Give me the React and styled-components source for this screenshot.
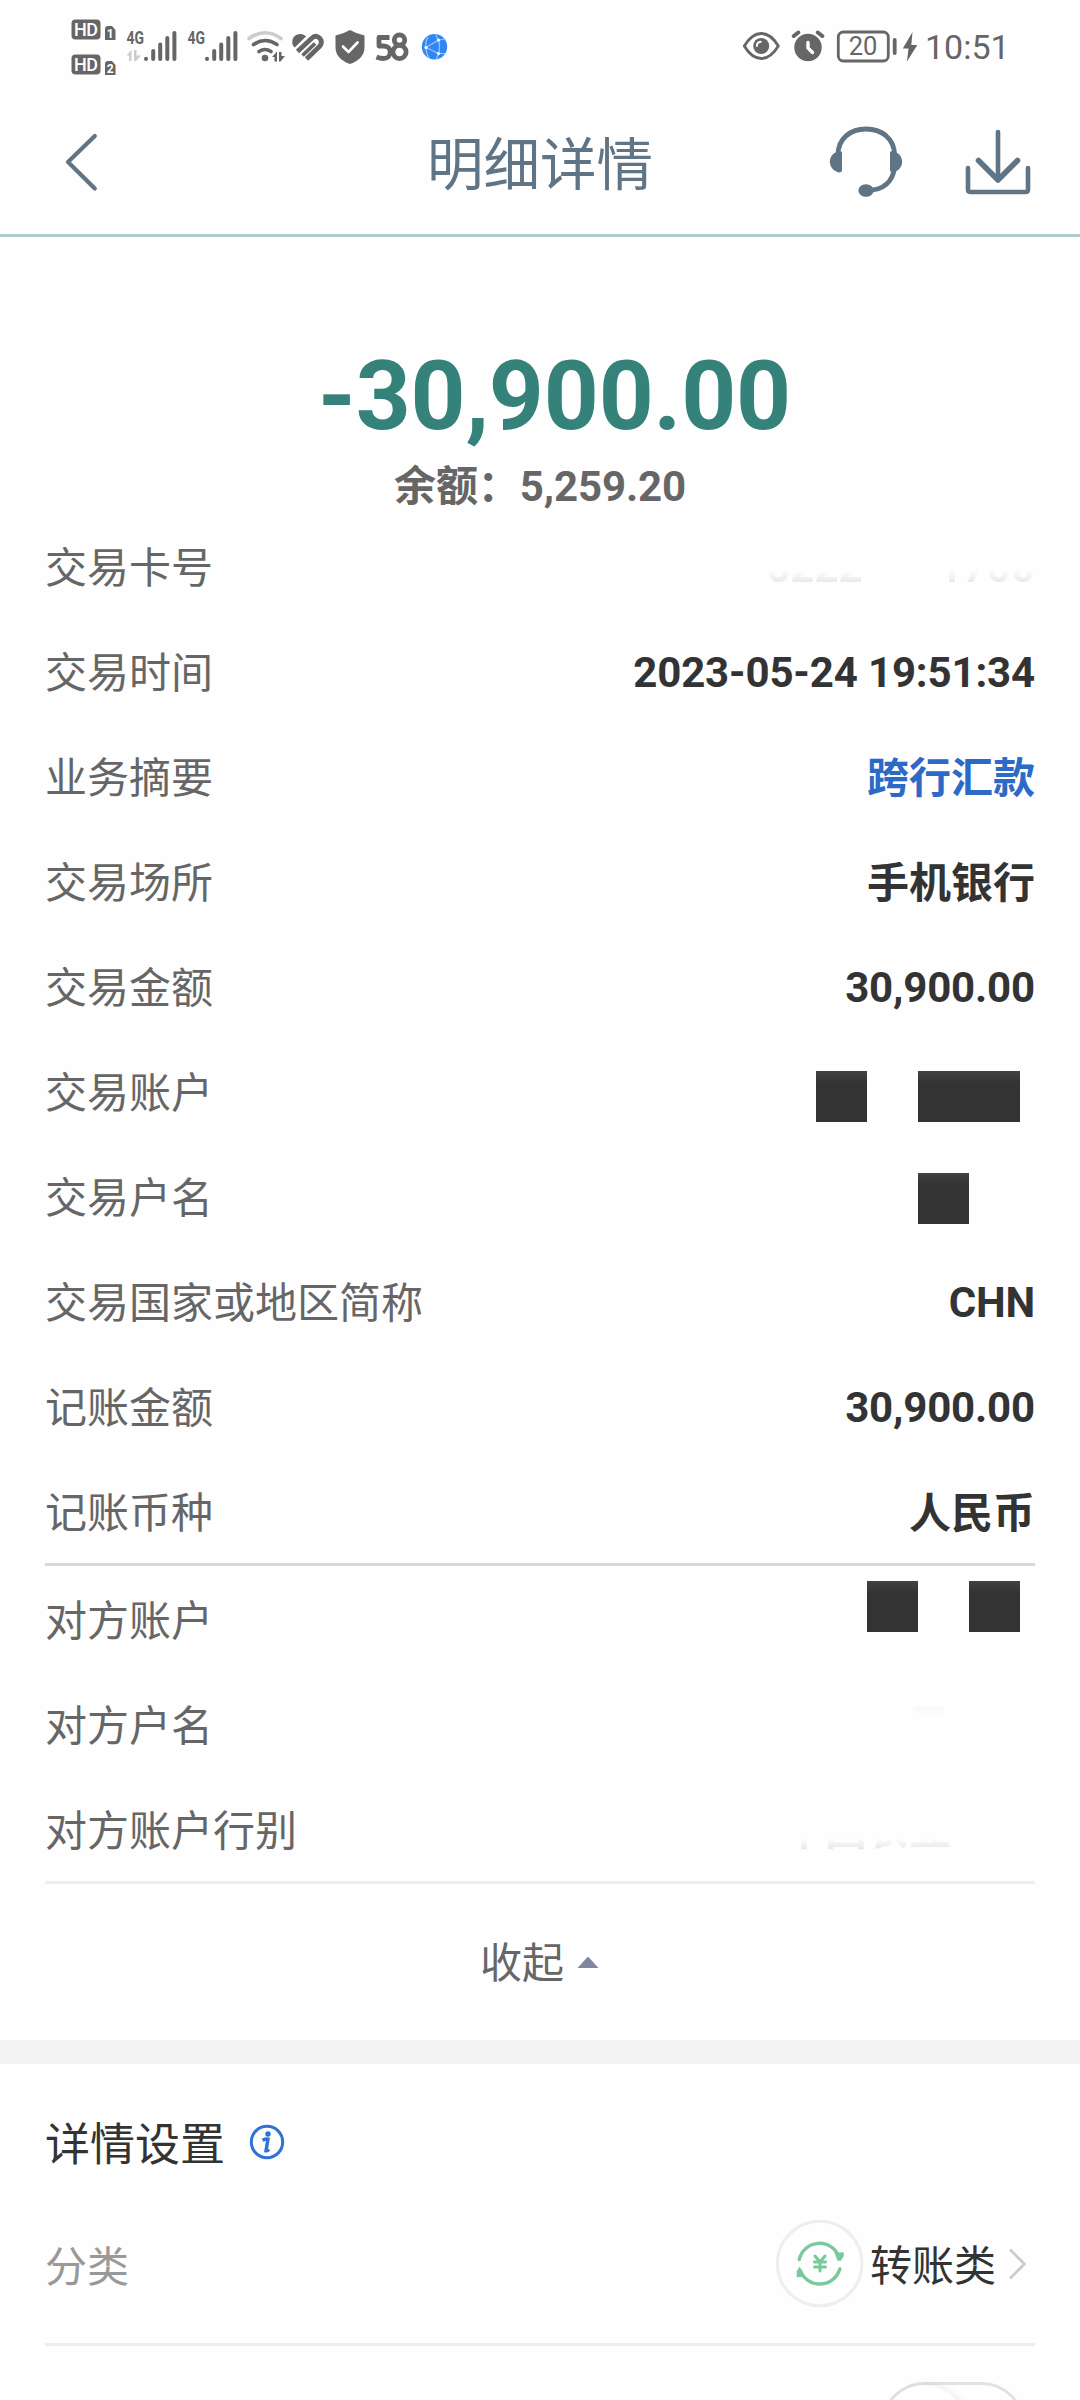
import React from "react";
import styled, { createGlobalStyle } from "styled-components";

const GlobalStyle = createGlobalStyle`
  html, body { margin: 0; padding: 0; background: #fefefe; }
  body { height: 2400px; overflow: hidden; }
  *, *::before, *::after { box-sizing: border-box; }
`;

const Screen = styled.div`
  width: 1080px;
  height: 2400px;
  overflow: hidden;
  display: flex;
  flex-direction: column;
  background: #fefefe;
  color: #333;
  font-family: Roboto, "Noto Sans CJK SC", sans-serif;
  font-size: 42px;
`;

/* ---------- status bar ---------- */

const StatusBar = styled.div`
  height: 90px;
  flex: none;
  display: flex;
  justify-content: space-between;
  padding: 0 73px 0 70px;
  color: #666;
`;

const StatusGroup = styled.div`
  display: flex;
`;

const Glyph = styled.svg`
  display: block;
  flex: none;
  width: ${(p) => p.$w}px;
  height: 90px;
  margin-left: ${(p) => p.$gap || 0}px;
  font-family: Roboto, sans-serif;
`;

const Clock = styled.span`
  width: 82px;
  margin-left: 7px;
  font-size: 34px;
  line-height: 95px;
  white-space: nowrap;
`;

const StatusGlyph = ({ x, w, gap, children }) => (
  <Glyph $w={w} $gap={gap} viewBox={`${x} 0 ${w} 90`} fill="currentColor">
    {children}
  </Glyph>
);

const HdBadges = () => (
  <StatusGlyph x={70} w={48}>
    {[19, 54].map((y, i) => (
      <g key={y}>
        <rect x="71.5" y={y + 0.5} width="29" height="20" rx="4" />
        <text x="86" y={y + 17} fill="#fff" fontSize="18" fontWeight="500" textAnchor="middle" textLength="24">HD</text>
        <path d={`M105 ${y + 21}v-11q0-3 3-3h4l3.500 4v10z`} />
        <text x="110.200" y={y + 18.500} fill="#fff" fontSize="12" fontWeight="700" textAnchor="middle">{i + 1}</text>
      </g>
    ))}
  </StatusGlyph>
);

const Signal = ({ gap, data }) => (
  <StatusGlyph x={126} w={52} gap={gap}>
    <text x="126.500" y="44" fontSize="18" fontWeight="700" textLength="17.500" lengthAdjust="spacingAndGlyphs">4G</text>
    {data && <path fill="#ccc" d="M126.500 55.500l5-5.500v11h-2.500v-5.500zM134 50h2.500v5.500h4.500l-5 5.500h-2z" />}
    <g stroke="currentColor" strokeWidth="4" strokeLinecap="round">
      <path d="M146 58.800v.2M153.200 51v8M160.200 44.500v14.500M167.300 38v21M174.400 33v26" />
    </g>
  </StatusGlyph>
);

const Wifi = () => (
  <StatusGlyph x={246} w={40} gap={7}>
    <g fill="none" strokeWidth="3.600" strokeLinecap="round">
      <path d="M249 38.500q16-11.500 32 0" stroke="#ccc" />
      <path d="M253.500 44.500q11.700-8 23.500 0M259 51.500q6-4 12 0" stroke="currentColor" />
    </g>
    <circle cx="265" cy="58" r="3.300" />
    <path d="M272 57l5-5.500v10h-2.500v-4.500zM279 52h2.500v4h3.500l-4.500 5.500h-1.500z" />
  </StatusGlyph>
);

const Heart = () => (
  <StatusGlyph x={291} w={34} gap={5}>
    <path d="M292.300 43.500c-.5-6 3-9.500 7.700-9.500 3 0 4.800 1 6 2.500L294.800 47.500c-1.500-1.300-2.300-2.500-2.500-4z" />
    <path fill="none" stroke="currentColor" strokeWidth="4.800" d="M297.500 51.500L312 38q4-3.500 7.500 0t.5 8L306.500 59" />
    <path fill="none" stroke="currentColor" strokeWidth="3.800" d="M302.500 55.500L315 43.500" />
  </StatusGlyph>
);

const Shield = () => (
  <StatusGlyph x={335} w={31} gap={10}>
    <path d="M350 30q7 4 14.500 5.500V47q0 12-14.500 17Q335.500 59 335.500 47V35.500Q343 34 350 30z" />
    <path d="M343 46.500l5.500 5.500 9-9.500" fill="none" stroke="#fff" strokeWidth="2.600" strokeLinecap="round" strokeLinejoin="round" />
  </StatusGlyph>
);

const AppBadge = () => (
  <StatusGlyph x={374} w={36} gap={8}>
    <g fill="none" stroke="currentColor" strokeWidth="4.800" strokeLinejoin="round">
      <path d="M389.500 37.500H379V46h4.500c9.500 0 8.500 12.500 0 12.500q-3.500 0-7-1.500" />
      <circle cx="399.500" cy="40" r="5.200" />
      <circle cx="399.500" cy="52" r="6.600" />
    </g>
  </StatusGlyph>
);

const Globe = () => (
  <StatusGlyph x={421} w={27} gap={11}>
    <circle cx="434.500" cy="46.800" r="12.700" fill="#3186f5" />
    <g stroke="#9cc5fb" strokeWidth="1.200" fill="none">
      <path d="M426 47.500L438.500 40M426 47.500L438.500 53.500M438.500 40q2 7 0 13.500M426 47.500q-1-6 2-10.500M426 47.500q0 6 3 10.500M438.500 40l-3-5.500M438.500 40l7-1M438.500 53.500l6.500 0M438.500 53.500l-2 5.500" />
    </g>
    <g fill="#fff">
      <circle cx="426" cy="47.500" r="1.600" />
      <circle cx="438.500" cy="40" r="1.600" />
      <circle cx="438.500" cy="53.500" r="1.600" />
    </g>
  </StatusGlyph>
);

const Eye = () => (
  <StatusGlyph x={742} w={39}>
    <path d="M744.300 46q7.500-12.500 17-12.500T778.300 46q-7.500 12.500-17 12.500T744.300 46z" fill="none" stroke="currentColor" strokeWidth="2.800" strokeLinejoin="round" />
    <circle cx="761.200" cy="46" r="8" />
    <path d="M756.800 46q.2-4 4-4.300" fill="none" stroke="#fff" strokeWidth="1.900" strokeLinecap="round" />
  </StatusGlyph>
);

const Alarm = () => (
  <StatusGlyph x={791} w={35} gap={10}>
    <circle cx="808" cy="47.500" r="13.700" />
    <path d="M793.800 36l4.500-3.500M822.300 36l-4.500-3.500" stroke="currentColor" strokeWidth="4" strokeLinecap="round" />
    <path d="M808 42.500v5.500l4.500 4.500" fill="none" stroke="#fff" strokeWidth="3.400" strokeLinecap="round" strokeLinejoin="round" />
  </StatusGlyph>
);

const Battery = () => (
  <StatusGlyph x={836} w={62} gap={10}>
    <rect x="838.300" y="32" width="50" height="29" rx="5" fill="none" stroke="currentColor" strokeWidth="2.800" />
    <text x="863" y="55" fontSize="25.500" textAnchor="middle">20</text>
    <path d="M894.700 40v13" stroke="currentColor" strokeWidth="3.800" strokeLinecap="round" />
  </StatusGlyph>
);

const Bolt = () => (
  <StatusGlyph x={902} w={16} gap={4}>
    <path d="M912.500 32L902.800 48.500h5.700l-1.500 13L917.300 45h-6z" />
  </StatusGlyph>
);

/* ---------- navigation ---------- */

const NavBar = styled.header`
  height: 147px;
  flex: none;
  display: grid;
  grid-template-columns: 1fr auto 1fr;
  align-items: center;
  padding: 0 48px 0 63px;
  border-bottom: 3px solid #b3c9d0;
  color: #5f7485;
`;

const Title = styled.h1`
  margin: 0 15px 0 0;
  font-size: 56.5px;
  font-weight: 400;
  line-height: 80px;
  padding-top: 7px;
`;

const NavActions = styled.div`
  display: flex;
  justify-content: flex-end;
  gap: 61px;
`;

const Icon = styled.svg`
  display: block;
  flex: none;
  width: ${(p) => p.$w}px;
  height: ${(p) => p.$h}px;
`;

const BackIcon = () => (
  <Icon $w={38} $h={60} viewBox="63 132 38 60" fill="none" stroke="currentColor" strokeWidth="4.200" strokeLinecap="round" strokeLinejoin="round">
    <path d="M94.800 136L68 162l26.800 26.500" />
  </Icon>
);

const HeadsetIcon = () => (
  <Icon $w={74} $h={76} viewBox="830 124 74 76" fill="currentColor">
    <path d="M839 155C839 138 852 129 867 129s28.500 9 28.500 26M895.500 168q-3 21-26 22.500" fill="none" stroke="currentColor" strokeWidth="4.800" />
    <path d="M843 152.500v17.500q0 2.500-3 2.500c-12-3-12-18-1-21q4-1 4 1zM891 152.500v17.500q0 2.500 3 2.500c12-3 12-18 1-21q-4-1-4 1z" />
    <ellipse cx="867" cy="190.500" rx="7.600" ry="6.300" />
  </Icon>
);

const DownloadIcon = () => (
  <Icon $w={68} $h={76} viewBox="965 124 68 76" fill="none" stroke="currentColor" strokeWidth="4.600" strokeLinecap="round" strokeLinejoin="round">
    <path d="M969 168v21.500q0 2.500 2.500 2.500h55q2.500 0 2.500-2.500V168M999 132v47" />
    <path d="M979.500 160.500L999 180l19.500-19.500" strokeWidth="5.600" />
  </Icon>
);

/* ---------- transaction ---------- */

const Summary = styled.section`
  height: 278px;
  flex: none;
  display: flex;
  flex-direction: column;
  align-items: center;
  padding-top: 103px;
  font-weight: 700;
`;

const Amount = styled.div`
  height: 112px;
  padding-left: 29px;
  font-size: 96px;
  line-height: 112px;
  letter-spacing: -0.2px;
  color: #35827b;
`;

const Balance = styled.div`
  margin-top: 4px;
  line-height: 62px;
  letter-spacing: -0.1px;
  color: #666;
`;

const Details = styled.dl`
  flex: none;
  margin: 0 45px;
  padding-top: ${(p) => p.$top || 0}px;
  height: ${(p) => p.$height}px;
  overflow: hidden;
  border-bottom: 3px solid ${(p) => p.$line};
`;

const Row = styled.div`
  height: 105px;
  display: flex;
  align-items: center;
  justify-content: space-between;
`;

const Label = styled.dt`
  padding-top: 2px;
  color: #666;
  line-height: 60px;
`;

const Value = styled.dd`
  margin: 0;
  padding-top: ${(p) => (p.$numeric ? 0 : 2)}px;
  font-weight: 700;
  line-height: 60px;
  letter-spacing: ${(p) => (p.$numeric ? "-0.15px" : "normal")};
  color: ${(p) => (p.$link ? "#2c6ac8" : "#333")};
`;

const Mask = styled.dd`
  align-self: flex-start;
  margin: ${(p) => p.$top}px ${(p) => p.$right}px 0 0;
  display: flex;
  gap: 51px;
`;

const Block = styled.span`
  width: ${(p) => p.$w || 51}px;
  height: 51px;
  background: linear-gradient(#414141, #333 12px);
`;

const Faded = styled.dd`
  margin: 0;
  display: flex;
  gap: 76px;
  font-weight: 700;
  line-height: 60px;
  color: transparent;
  background: linear-gradient(transparent ${(p) => p.$from}px, #dcdcdc ${(p) => p.$to}px);
  background-clip: text;
  -webkit-background-clip: text;
`;

const Smudge = styled.dd`
  align-self: flex-start;
  width: 28px;
  height: 8px;
  margin: 34px 92px 0 0;
  background: linear-gradient(#f8f8f8, #fdfdfd);
`;

const Collapse = styled.button`
  height: 156px;
  flex: none;
  display: flex;
  align-items: center;
  justify-content: center;
  gap: 12px;
  padding: 0;
  border: 0;
  background: none;
  font: inherit;
  color: #666;
`;

const CollapseText = styled.span`
  padding-bottom: 5px;
`;

const Separator = styled.div`
  height: 24px;
  flex: none;
  background: #f3f3f3;
`;

/* ---------- settings ---------- */

const Settings = styled.section`
  flex: none;
  margin: 0 45px;
`;

const SettingsTitle = styled.h2`
  height: 137px;
  margin: 0;
  padding-top: 18px;
  display: flex;
  align-items: center;
  gap: 24px;
  font-size: 45px;
  font-weight: 400;
`;

const Category = styled.div`
  height: 145px;
  display: flex;
  align-items: center;
  border-bottom: 3px solid #ededed;
`;

const CategoryLabel = styled.span`
  flex: 1;
  padding-bottom: 18px;
  color: #999;
`;

const CategoryValue = styled.div`
  display: flex;
  align-items: center;
  padding: 0 7px 17px 0;
`;

const CategoryName = styled.span`
  margin: 0 12px 0 6px;
  padding-bottom: 2px;
`;

const SwitchRow = styled.div`
  display: flex;
  justify-content: flex-end;
  padding: 36px 10px 0 0;
`;

const Switch = styled.span`
  width: 144px;
  height: 87px;
  border: 3px solid #e2e2e6;
  border-radius: 44px;
`;

const Knob = styled.span`
  display: block;
  width: 81px;
  height: 81px;
  border-radius: 50%;
  background: #fefefe;
  box-shadow: 3px 1px 8px rgba(0, 0, 0, 0.09);
`;

const InfoIcon = () => (
  <Icon $w={36} $h={36} viewBox="249 2124 36 36" fill="#2f72d6">
    <circle cx="267" cy="2142" r="15.700" fill="none" stroke="#2f72d6" strokeWidth="3" />
    <circle cx="268" cy="2134" r="2.700" />
    <path d="M262.500 2140.300q3-1.500 5.500-1.200l-2 11.700q1.500.2 3-1.300" fill="none" stroke="#2f72d6" strokeWidth="3.400" />
  </Icon>
);

const TransferIcon = () => (
  <Icon $w={88} $h={88} viewBox="777 2220 88 88" fill="none" stroke="#78ca9b" strokeWidth="3.400" strokeLinecap="round">
    <circle cx="820.700" cy="2263.500" r="42.300" stroke="#eee" strokeWidth="3" />
    <path d="M800.200 2259.500a20.800 20.800 0 0 1 40-2M840.800 2269a20.800 20.800 0 0 1-39.500 1.500" />
    <path d="M836.500 2253.500l7.500-.5v3l-2.500 4h-2.500zM805 2276l-6.500.500v-5l2-3.500z" fill="#78ca9b" strokeWidth="1.500" />
    <path d="M816 2256l5 6 5-6M815.500 2262h11M815.500 2267h11M821 2262v9" strokeWidth="3" />
  </Icon>
);

const detailRows = [
  { label: "交易时间", value: "2023-05-24 19:51:34", numeric: true },
  { label: "业务摘要", value: "跨行汇款", link: true },
  { label: "交易场所", value: "手机银行" },
  { label: "交易金额", value: "30,900.00", numeric: true },
];

const bookingRows = [
  { label: "交易国家或地区简称", value: "CHN", numeric: true },
  { label: "记账金额", value: "30,900.00", numeric: true },
  { label: "记账币种", value: "人民币" },
];

const DetailRow = ({ label, value, link, numeric, children }) => (
  <Row>
    <Label>{label}</Label>
    {value ? (
      <Value $link={link} $numeric={numeric}>
        {value}
      </Value>
    ) : (
      children
    )}
  </Row>
);

export default function App() {
  return (
    <>
      <GlobalStyle />
      <Screen>
        <StatusBar>
          <StatusGroup>
            <HdBadges />
            <Signal gap={8} data />
            <Signal gap={9} />
            <Wifi />
            <Heart />
            <Shield />
            <AppBadge />
            <Globe />
          </StatusGroup>
          <StatusGroup>
            <Eye />
            <Alarm />
            <Battery />
            <Bolt />
            <Clock>10:51</Clock>
          </StatusGroup>
        </StatusBar>

        <NavBar>
          <BackIcon />
          <Title>明细详情</Title>
          <NavActions>
            <HeadsetIcon />
            <DownloadIcon />
          </NavActions>
        </NavBar>

        <Summary>
          <Amount>-30,900.00</Amount>
          <Balance>余额：5,259.20</Balance>
        </Summary>

        <Details $height={1051} $line="#d9d9d9">
          <DetailRow label="交易卡号">
            <Faded $from={32} $to={51}>
              <span>6222</span>
              <span>1700</span>
            </Faded>
          </DetailRow>
          {detailRows.map((row) => (
            <DetailRow key={row.label} {...row} />
          ))}
          <DetailRow label="交易账户">
            <Mask $top={31} $right={15}>
              <Block />
              <Block $w={102} />
            </Mask>
          </DetailRow>
          <DetailRow label="交易户名">
            <Mask $top={28} $right={66}>
              <Block />
            </Mask>
          </DetailRow>
          {bookingRows.map((row) => (
            <DetailRow key={row.label} {...row} />
          ))}
        </Details>

        <Details $height={318} $top={2} $line="#ededed">
          <DetailRow label="对方账户">
            <Mask $top={13} $right={15}>
              <Block />
              <Block />
            </Mask>
          </DetailRow>
          <DetailRow label="对方户名">
            <Smudge />
          </DetailRow>
          <DetailRow label="对方账户行别">
            <Faded $from={38} $to={53}>中国农业　　</Faded>
          </DetailRow>
        </Details>

        <Collapse>
          <CollapseText>收起</CollapseText>
          <Icon $w={24} $h={14} viewBox="0 0 24 14">
            <path d="M1.500 13L12 1.500 22.500 13z" fill="#7f869e" />
          </Icon>
        </Collapse>

        <Separator />

        <Settings>
          <SettingsTitle>
            详情设置
            <InfoIcon />
          </SettingsTitle>
          <Category>
            <CategoryLabel>分类</CategoryLabel>
            <CategoryValue>
              <TransferIcon />
              <CategoryName>转账类</CategoryName>
              <Icon $w={20} $h={34} viewBox="0 0 20 34" fill="none" stroke="#ccc" strokeWidth="2.800">
                <path d="M2 2.500L16.500 17 2 31.500" />
              </Icon>
            </CategoryValue>
          </Category>
          <SwitchRow>
            <Switch>
              <Knob />
            </Switch>
          </SwitchRow>
        </Settings>
      </Screen>
    </>
  );
}
